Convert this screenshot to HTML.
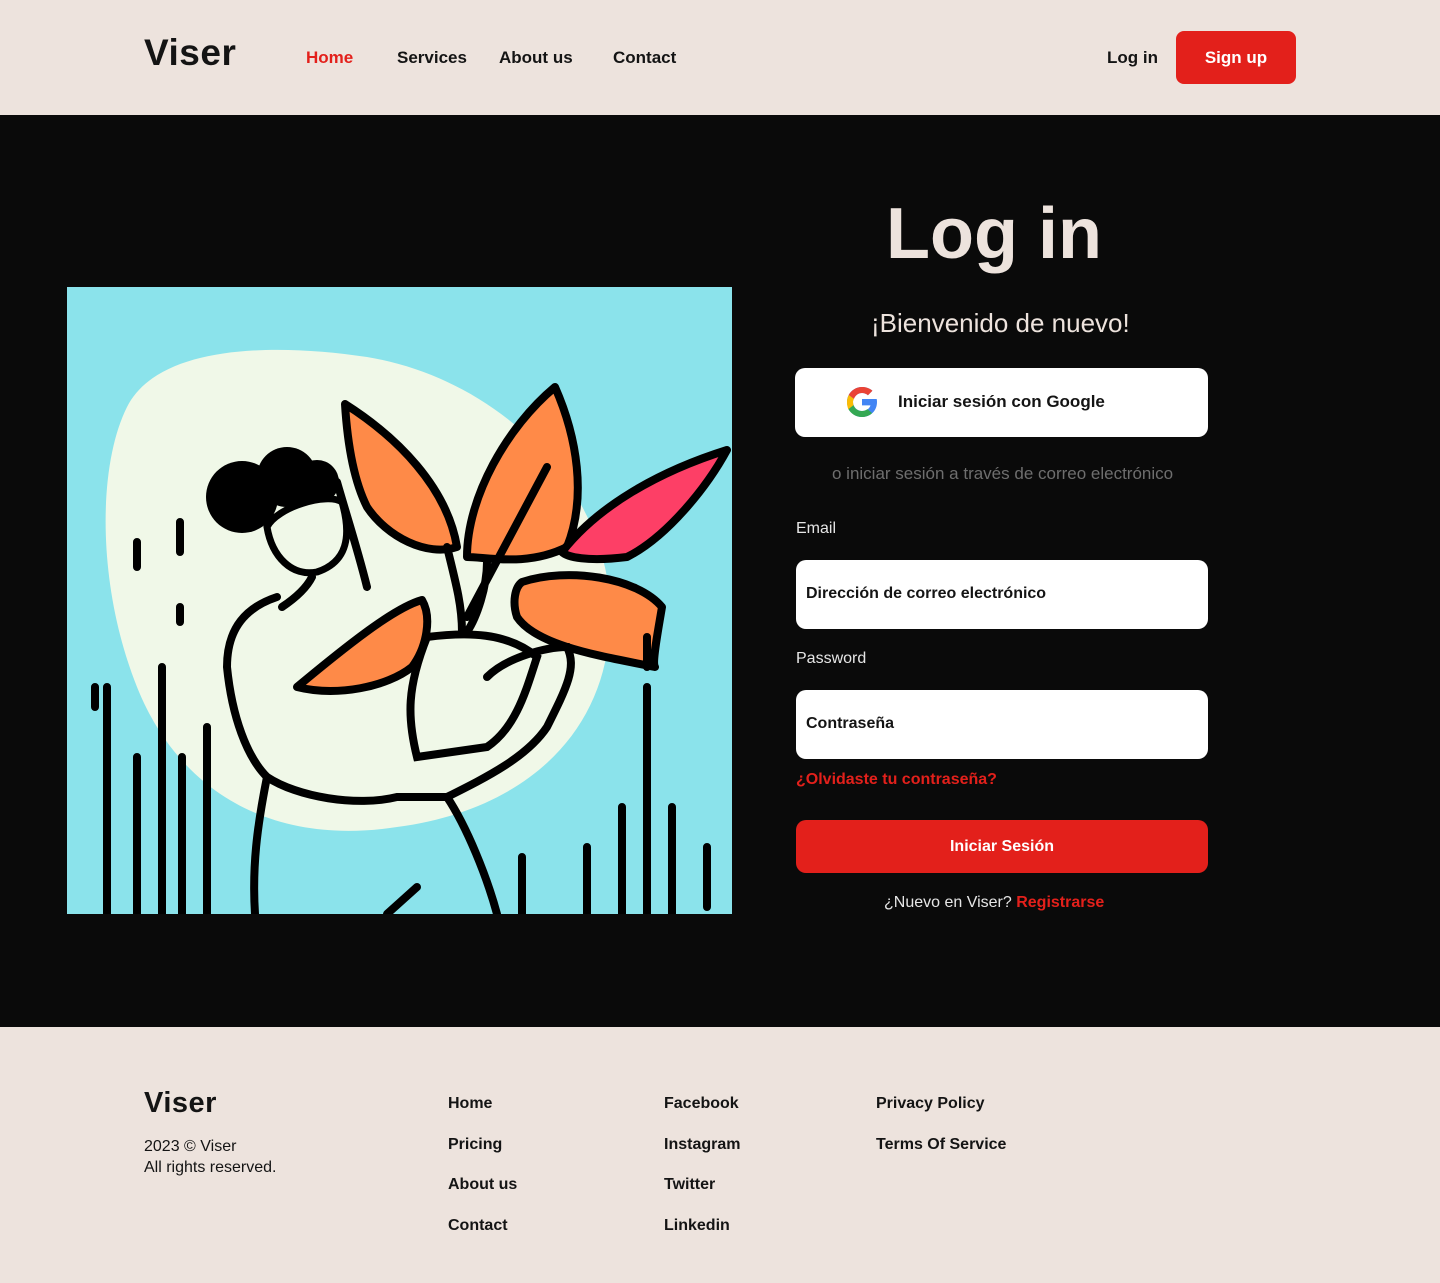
<!DOCTYPE html>
<html><head><meta charset="utf-8"><style>
*{margin:0;padding:0;box-sizing:border-box}
body{width:1440px;height:1283px;background:#ede3dd;font-family:"Liberation Sans",sans-serif;color:#141414;position:relative;overflow:hidden}
.abs{position:absolute}
header{position:absolute;left:0;top:0;width:1440px;height:115px;background:#ede3dd}
.logo{font-weight:700;font-size:37px;letter-spacing:0.5px}
.nav{font-size:17px;font-weight:700}
main{position:absolute;left:0;top:115px;width:1440px;height:912px;background:#0a0a0a}
.inp{position:absolute;left:796px;width:412px;height:69px;background:#fff;border-radius:10px;font-weight:700;font-size:16px;padding:25px 10px;color:#141414}
.lbl{position:absolute;left:796px;color:#e6e6e6;font-size:16px}
.f{position:absolute;font-size:16px;font-weight:700}
</style></head><body>
<header>
<div class="abs logo" style="left:144px;top:32px">Viser</div>
<div class="abs nav" style="left:306px;top:48px;color:#e3201b">Home</div>
<div class="abs nav" style="left:397px;top:48px">Services</div>
<div class="abs nav" style="left:499px;top:48px">About us</div>
<div class="abs nav" style="left:613px;top:48px">Contact</div>
<div class="abs nav" style="left:1107px;top:48px">Log in</div>
<div class="abs nav" style="left:1176px;top:31px;width:120px;height:53px;background:#e3201b;border-radius:8px;color:#fff;text-align:center;line-height:53px">Sign up</div>
</header>
<main>
<svg class="abs" style="left:67px;top:172px" width="665" height="627" viewBox="0 0 665 627">
<rect width="665" height="627" fill="#8be3eb"/>
<path d="M60 120 C90 60 200 55 300 70 C420 90 520 180 540 290 C560 420 480 520 330 540 C200 560 110 500 70 400 C30 300 30 180 60 120Z" fill="#f0f8e8"/>
<g fill="#fe8a48" stroke="#000" stroke-width="8" stroke-linejoin="round">
<path d="M278 117 C330 150 380 200 390 260 C360 270 320 250 300 220 C285 190 280 150 278 117Z"/>
<path d="M488 100 C510 150 520 210 500 260 C460 280 420 270 400 270 C400 210 440 140 488 100Z" fill="#ff8a48"/>
<path d="M660 163 C640 200 600 250 560 270 C520 275 500 270 495 265 C530 220 590 185 660 163Z" fill="#fd3f66"/>
<path d="M455 295 C500 280 570 290 595 320 C590 350 585 375 588 380 C540 370 470 360 450 330 C445 315 448 300 455 295Z"/>
<path d="M355 313 C330 320 290 350 230 400 C270 410 320 400 345 380 C360 360 365 330 355 313Z"/>
</g>
<g fill="none" stroke="#000" stroke-width="8" stroke-linecap="round">
<path d="M360 350 C340 400 340 430 350 470 L420 460 C450 440 460 400 470 370 C440 345 400 345 360 350Z" fill="#f0f8e8"/>
<path d="M210 310 C180 320 160 340 160 380 C165 430 180 470 200 490 C230 510 290 520 330 510 L380 510 C420 490 460 470 480 440 C500 400 510 380 500 360 C480 360 440 370 420 390"/>
<path d="M200 490 C190 540 185 580 188 627 M380 510 C400 540 420 590 430 627 M320 627 L350 600"/>
<path d="M380 260 C390 300 395 320 395 345 M420 275 C420 300 410 330 400 345 M480 180 L400 330"/>
<path d="M270 195 C280 230 290 260 300 300 M245 290 C240 300 230 310 215 320"/>
<path d="M40 400 L40 627 M70 470 L70 627 M95 380 L95 627 M115 470 L115 627 M140 440 L140 627 M605 520 L605 627 M580 400 L580 627 M640 620 L640 560 M555 520 L555 627 M520 560 L520 627 M455 570 L455 627 M28 400 L28 420 M70 255 L70 280 M113 235 L113 265 M113 320 L113 335 M580 350 L580 380"/>
</g>
<circle cx="175" cy="210" r="36" fill="#000"/><circle cx="220" cy="190" r="30" fill="#000"/><circle cx="250" cy="195" r="22" fill="#000"/>
<path d="M200 240 C210 220 260 205 275 215 C285 250 280 275 250 285 C225 290 205 270 200 240Z" fill="#f0f8e8" stroke="#000" stroke-width="7"/>
</svg>
<div class="abs" style="left:886px;top:78px;font-size:72px;font-weight:700;color:#ede3dd">Log in</div>
<div class="abs" style="left:871px;top:193px;font-size:26px;color:#ede3dd">¡Bienvenido de nuevo!</div>
<div class="abs" style="left:795px;top:253px;width:413px;height:69px;background:#fff;border-radius:10px">
<svg class="abs" style="left:49px;top:16px" width="36" height="36" viewBox="0 0 48 48"><path d="M43.6 20H24v8.5h11.3C34 33 29.6 36 24 36c-6.6 0-12-5.4-12-12s5.4-12 12-12c3 0 5.8 1.1 7.9 3l6-6C34.3 5.7 29.4 4 24 4 13 4 4 13 4 24s9 20 20 20c11 0 20-8 20-20 0-1.300-.1-2.700-.4-4z" fill="#4285f4"/><path d="M6.3 14.7l7 5.1C15.1 15.1 19.2 12 24 12c3 0 5.8 1.1 7.9 3l6-6C34.3 5.7 29.4 4 24 4 16.3 4 9.7 8.3 6.3 14.7z" fill="#ea4335"/><path d="M24 44c5.2 0 10-2 13.5-5.2l-6.2-5.3C29.3 35.1 26.8 36 24 36c-5.6 0-10-3.5-11.4-8.4l-7 5.4C9 39.6 16 44 24 44z" fill="#34a853"/><path d="M6.3 14.7l7 5.1C12.5 21.1 12 22.5 12 24s.3 2.9.7 4.2l-7 5.4C4.6 30.6 4 27.4 4 24s.8-6.5 2.3-9.3z" fill="#fbbc05"/></svg>
<div class="abs" style="left:103px;top:24px;font-weight:700;font-size:17px">Iniciar sesión con Google</div></div>
<div class="abs" style="left:832px;top:349px;color:#6e6e6e;font-size:17px">o iniciar sesión a través de correo electrónico</div>
<div class="lbl" style="top:405px">Email</div>
<div class="inp" style="top:445px">Dirección de correo electrónico</div>
<div class="lbl" style="top:535px">Password</div>
<div class="inp" style="top:575px">Contraseña</div>
<div class="abs" style="left:796px;top:656px;color:#e3201b;font-weight:700;font-size:16px">¿Olvidaste tu contraseña?</div>
<div class="abs" style="left:796px;top:705px;width:412px;height:53px;background:#e3201b;border-radius:10px;color:#fff;font-weight:700;font-size:16px;text-align:center;line-height:53px">Iniciar Sesión</div>
<div class="abs" style="left:884px;top:779px;color:#e6e6e6;font-size:16px">¿Nuevo en Viser? <b style="color:#e3201b">Registrarse</b></div>
</main>
<div class="abs logo" style="left:144px;top:1087px;font-size:29px">Viser</div>
<div class="abs" style="left:144px;top:1136px;font-size:16px;line-height:21px">2023 © Viser<br>All rights reserved.</div>
<div class="f" style="left:448px;top:1095px">Home</div><div class="f" style="left:448px;top:1136px">Pricing</div><div class="f" style="left:448px;top:1176px">About us</div><div class="f" style="left:448px;top:1217px">Contact</div>
<div class="f" style="left:664px;top:1095px">Facebook</div><div class="f" style="left:664px;top:1136px">Instagram</div><div class="f" style="left:664px;top:1176px">Twitter</div><div class="f" style="left:664px;top:1217px">Linkedin</div>
<div class="f" style="left:876px;top:1095px">Privacy Policy</div><div class="f" style="left:876px;top:1136px">Terms Of Service</div>
</body></html>
